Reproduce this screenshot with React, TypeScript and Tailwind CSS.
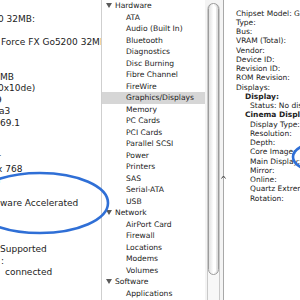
import React from "react";

const font = { fontFamily: '"DejaVu Sans", "Liberation Sans", sans-serif' };

// visible tail of the report text in the window behind: [text, x offset]
const reportLines: [string, number][] = [
  ["0 32MB:", -2],
  ["", 0],
  ["Force FX Go5200 32MB", 1],
  ["", 0],
  ["", 0],
  ["MB", 0],
  ["0x10de)", -2],
  ["9", -4],
  ["a3", -1],
  ["69.1", 0],
  ["", 0],
  ["", 0],
  ["r", -3],
  ["x 768", -3],
  ["r", -2],
  ["", 0],
  ["ware Accelerated", 0],
  ["", 0],
  ["", 0],
  ["", 0],
  ["Supported", 0],
  [":", 1],
  ["connected", 5],
];

type NavItem = { label: string; group?: boolean; selected?: boolean };

const nav: NavItem[] = [
  { label: "Hardware", group: true },
  { label: "ATA" },
  { label: "Audio (Built In)" },
  { label: "Bluetooth" },
  { label: "Diagnostics" },
  { label: "Disc Burning" },
  { label: "Fibre Channel" },
  { label: "FireWire" },
  { label: "Graphics/Displays", selected: true },
  { label: "Memory" },
  { label: "PC Cards" },
  { label: "PCI Cards" },
  { label: "Parallel SCSI" },
  { label: "Power" },
  { label: "Printers" },
  { label: "SAS" },
  { label: "Serial-ATA" },
  { label: "USB" },
  { label: "Network", group: true },
  { label: "AirPort Card" },
  { label: "Firewall" },
  { label: "Locations" },
  { label: "Modems" },
  { label: "Volumes" },
  { label: "Software", group: true },
  { label: "Applications" },
];

// [text, indent level, bold]
const details: [string, number, boolean][] = [
  ["Chipset Model: GeForce", 0, false],
  ["Type:", 0, false],
  ["Bus:", 0, false],
  ["VRAM (Total):", 0, false],
  ["Vendor:", 0, false],
  ["Device ID:", 0, false],
  ["Revision ID:", 0, false],
  ["ROM Revision:", 0, false],
  ["Displays:", 0, false],
  ["Display:", 1, true],
  ["Status: No display connected", 2, false],
  ["Cinema Display:", 1, true],
  ["Display Type:", 2, false],
  ["Resolution:", 2, false],
  ["Depth:", 2, false],
  ["Core Image:", 2, false],
  ["Main Display:", 2, false],
  ["Mirror:", 2, false],
  ["Online:", 2, false],
  ["Quartz Extreme:", 2, false],
  ["Rotation:", 2, false],
];

const Disclosure = () => (
  <svg width="6" height="5" viewBox="0 0 6 5" className="shrink-0">
    <polygon points="0,0 6,0 3,5" fill="#5a5a5a" />
  </svg>
);

const App = () => {
  return (
    <div
      className="relative w-[300px] h-[300px] overflow-hidden flex bg-white text-[#222]"
      style={font}
    >
      {/* report pane of the window behind */}
      <div className="w-[102px] shrink-0 overflow-hidden border-r border-[#cfcfcf] pt-[14.25px] text-[9px] leading-[11.5px]">
        {reportLines.map(([text, x], i) => (
          <div key={i} className="h-[11.5px] whitespace-nowrap" style={{ marginLeft: x }}>
            {text}
          </div>
        ))}
      </div>

      {/* contents list */}
      <div className="w-[103px] shrink-0 overflow-hidden text-[7.6px] leading-[11.5px]">
        {nav.map((item) => (
          <div
            key={item.label}
            className={
              "h-[11.5px] flex items-center whitespace-nowrap " +
              (item.selected ? "bg-[#d6d6d6] " : "") +
              (item.group ? "pl-[4px] gap-[3px]" : "pl-[24px]")
            }
          >
            {item.group && <Disclosure />}
            <span>{item.label}</span>
          </div>
        ))}
      </div>

      {/* scroller */}
      <div className="w-[18px] shrink-0 bg-[#f4f4f4] pl-[2px] pt-[3px]">
        <div className="w-[13px] h-full border-x border-[#c9c9c9] rounded-t-full bg-[#f7f7f7]">
          <div className="h-[272px] rounded-full border border-[#9c9c9c] bg-gradient-to-r from-[#e2e2e2] via-white to-[#d9d9d9] p-[2px]">
            <div className="h-full w-[3px] ml-[2px] rounded-full bg-white" />
          </div>
        </div>
      </div>
      <div className="relative w-px shrink-0 bg-[#a8a8a8]">
        <svg className="absolute left-[-2px] top-[175px]" width="5" height="4" viewBox="0 0 5 4">
          <polyline points="0.5,3.5 2.5,1 4.5,3.5" fill="none" stroke="#444" strokeWidth="1" />
        </svg>
      </div>

      {/* detail pane */}
      <div className="flex-1 overflow-hidden pt-[8.7px] text-[7.5px] leading-[9.25px]">
        {details.map(([text, level, bold], i) => (
          <div
            key={i}
            className={
              "h-[9.25px] whitespace-nowrap " +
              (level === 0 ? "pl-[12px]" : level === 1 ? "pl-[21px]" : "pl-[26px]") +
              (bold ? " font-bold" : "")
            }
          >
            {text}
          </div>
        ))}
      </div>

      {/* hand-drawn annotation marks */}
      <svg className="absolute inset-0 pointer-events-none" width="300" height="300" viewBox="0 0 300 300">
        <ellipse cx="40" cy="203" rx="68" ry="30" fill="none" stroke="#2f6fd6" strokeWidth="2.6" />
        <ellipse cx="323" cy="157" rx="30" ry="15" fill="none" stroke="#2f6fd6" strokeWidth="2.6" />
      </svg>
    </div>
  );
};

export default App;
